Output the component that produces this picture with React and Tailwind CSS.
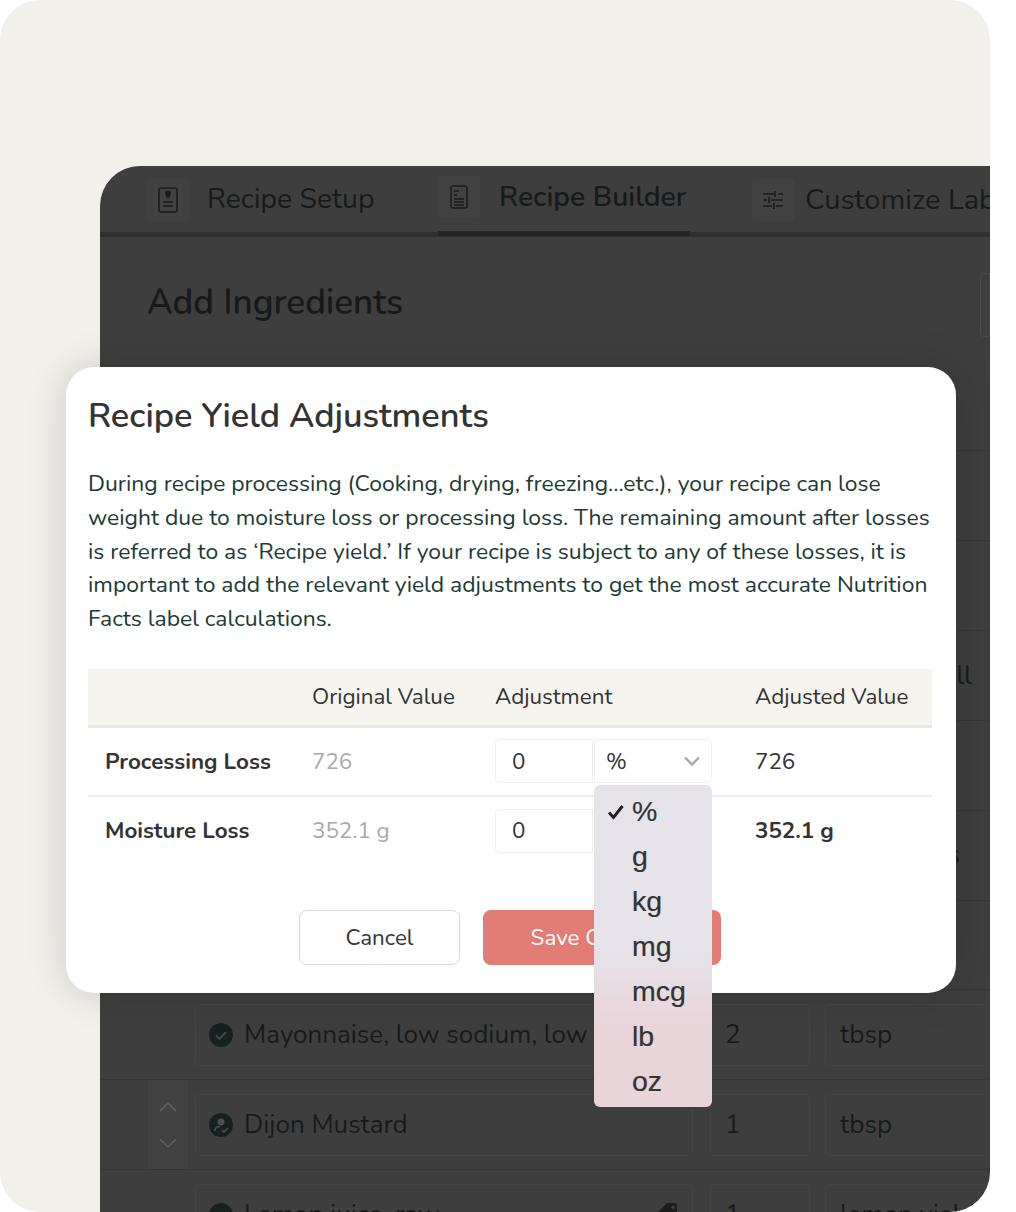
const dropdownUnits = ['g', 'kg', 'mg', 'mcg', 'lb', 'oz'];

const BookIcon = () => (
  <svg width="20" height="26" viewBox="0 0 20 26" fill="none" stroke="#191b1b" strokeWidth="1.6">
    <rect x="1" y="1" width="18" height="24" rx="2" />
    <path d="M7 6.500a3 3 0 1 1 6 0c0 1.200-.8 1.800-1 2.800v1.200H8V9.300c-.2-1-1-1.600-1-2.800z" fill="#191b1b" stroke="none" />
    <path d="M5 15h10M5 19h10" />
  </svg>
);

const ListIcon = () => (
  <svg width="18" height="24" viewBox="0 0 18 24" fill="none" stroke="#191b1b" strokeWidth="1.5">
    <rect x="1" y="1" width="16" height="22" rx="2" />
    <path d="M4 6h5M4 10h3M4 14h10M4 17h10M4 20h10" />
  </svg>
);

const SlidersIcon = () => (
  <svg width="20" height="20" viewBox="0 0 20 20" fill="none" stroke="#191b1b" strokeWidth="1.6">
    <path d="M0 4h11M15 4h5M12 1v6M0 10h4M8 10h12M6 7v6M0 16h9M13 16h7M11 13v6" />
  </svg>
);

const VerifiedDot = () => (
  <svg width="24" height="24" viewBox="0 0 24 24" className="shrink-0">
    <circle cx="12" cy="12" r="12" fill="#18211f" />
    <path d="M7 12.500l3.500 3.500L17 9" fill="none" stroke="#4a4f4e" strokeWidth="1.800" />
  </svg>
);

const PersonDot = () => (
  <svg width="24" height="24" viewBox="0 0 24 24" className="shrink-0">
    <circle cx="12" cy="12" r="12" fill="#18211f" />
    <circle cx="12" cy="9" r="3.500" fill="#4a4f4e" />
    <path d="M5.500 18c.5-3 3-4.500 5.500-4.500M13 17l2 2 4-4" fill="none" stroke="#4a4f4e" strokeWidth="1.600" />
  </svg>
);

const TagIcon = () => (
  <svg width="26" height="26" viewBox="0 0 26 26" className="shrink-0">
    <path d="M14 1h10v10L11 25 1 14z" fill="#1c1e1e" />
    <circle cx="20" cy="5.500" r="1.800" fill="#3e3e3e" />
  </svg>
);

const Chevron = ({ up }) => (
  <svg width="18" height="10" viewBox="0 0 18 10" fill="none" stroke="#5b5c5c" strokeWidth="1.800">
    <path d={up ? 'M1 9l8-8 8 8' : 'M1 1l8 8 8-8'} />
  </svg>
);

const Tab = ({ icon, label, active, tileClass, textClass }) => (
  <div className={`flex h-[70px] shrink-0 items-center whitespace-nowrap ${active ? 'border-b-[5px] border-[#232424]' : ''} ${tileClass}`}>
    <div className="flex h-[42px] w-[42px] shrink-0 items-center justify-center rounded bg-[#424242]">{icon}</div>
    <span className={`text-[#181a1a] ${textClass}`}>{label}</span>
  </div>
);

const IngredientRow = ({ icon, name, qty, unit, arrows, tag }) => (
  <div className="flex h-[90px] shrink-0 items-center border-b border-[#363636] pl-[48px]">
    <div className={`mr-[7px] flex h-full w-[40px] shrink-0 flex-col items-center justify-center gap-[26px] ${arrows ? 'bg-[#424242]' : ''}`}>
      {arrows && <Chevron up />}
      {arrows && <Chevron />}
    </div>
    <div className="flex h-[62px] w-[498px] shrink-0 items-center gap-[11px] rounded border border-[#444444] px-[13px]">
      {icon}
      <span className="flex-1 whitespace-nowrap text-[26px] text-[#181a1a]">{name}</span>
      {tag && <TagIcon />}
    </div>
    <div className="ml-[17px] flex h-[62px] w-[100px] shrink-0 items-center rounded border border-[#444444] pl-[14px] text-[26px] text-[#181a1a]">{qty}</div>
    <div className="ml-[15px] flex h-[62px] w-[300px] shrink-0 items-center rounded border border-[#444444] pl-[14px] text-[26px] text-[#181a1a]">{unit}</div>
  </div>
);

const ValueBox = ({ value }) => (
  <div className="flex h-[44px] w-[98px] items-center rounded-l-[5px] border border-[#f0f0ee] pl-[16px] text-[#333]">{value}</div>
);

const App = () => {
  return (
    <div className="h-[1212px] w-[1016px] bg-white font-['Nunito','Lato','Noto_Sans',sans-serif]">
      <div className="relative h-[1212px] w-[990px] overflow-hidden rounded-[40px] bg-[#f1f0eb] pl-[100px] pt-[166px]">
        {/* Dimmed app behind the modal */}
        <div className="flex h-[1046px] flex-col overflow-hidden rounded-tl-[40px] bg-[#3e3e3e]">
          <div className="flex h-[71px] shrink-0 items-start border-b-[5px] border-[#2f2f2f] pl-[47px]">
            <Tab icon={<BookIcon />} label="Recipe Setup" tileClass="w-[291px] pb-[3px]" textClass="ml-[18px] text-[28.400px]" />
            <Tab icon={<ListIcon />} label="Recipe Builder" active tileClass="w-[252px] pb-[3px]" textClass="ml-[19px] text-[28.400px] font-semibold" />
            <Tab icon={<SlidersIcon />} label="Customize Label" tileClass="ml-[62px] w-[300px] pb-[3px]" textClass="ml-[11px] text-[29px]" />
          </div>
          <div className="flex h-[124px] shrink-0 items-start justify-between pl-[47px] pt-[44px]">
            <h2 className="text-[35px] font-semibold leading-[44px] text-[#181a1a]">Add Ingredients</h2>
            <div className="mt-[-8px] h-[64px] w-[10px] rounded-l border border-[#4a4a4a]" />
          </div>
          {/* rows sit mostly behind the modal, only their edges show */}
          <div className="flex h-[90px] shrink-0 border-b border-[#363636]" />
          <div className="flex h-[90px] shrink-0 border-b border-[#363636]" />
          <div className="flex h-[90px] shrink-0 border-b border-[#363636]" />
          <div className="flex h-[90px] shrink-0 items-center justify-end border-b border-[#363636] pr-[18px] text-[26px] text-[#181a1a]">ll</div>
          <div className="flex h-[90px] shrink-0 border-b border-[#363636]" />
          <div className="flex h-[90px] shrink-0 items-end justify-end border-b border-[#363636] pb-[26px] pr-[30px] text-[26px] text-[#181a1a]">s</div>
          <div className="flex h-[89px] shrink-0 border-b border-[#363636]" />
          <IngredientRow icon={<VerifiedDot />} name="Mayonnaise, low sodium, low calorie" qty="2" unit="tbsp" />
          <IngredientRow icon={<PersonDot />} name="Dijon Mustard" qty="1" unit="tbsp" arrows />
          <IngredientRow icon={<VerifiedDot />} name="Lemon juice, raw" qty="1" unit="lemon yield" tag />
        </div>

        {/* Modal */}
        <div className="absolute left-[66px] top-[367px] h-[626px] w-[890px] rounded-[28px] bg-white pl-[22px] pr-[24px] pt-[28px] shadow-[0_0_40px_rgba(0,0,0,0.16)]">
          <h1 className="text-[34.4px] font-semibold leading-[42px] text-[#333]">Recipe Yield Adjustments</h1>
          <p className="mt-[30px] whitespace-nowrap text-[22.9px] leading-[33.8px] text-[#1c3a35]">
            During recipe processing (Cooking, drying, freezing...etc.), your recipe can lose<br />
            weight due to moisture loss or processing loss. The remaining amount after losses<br />
            is referred to as ‘Recipe yield.’ If your recipe is subject to any of these losses, it is<br />
            important to add the relevant yield adjustments to get the most accurate Nutrition<br />
            Facts label calculations.
          </p>

          <div className="mt-[33px] text-[22.4px] text-[#333]">
            <div className="grid h-[59px] grid-cols-[224px_183px_260px_1fr] items-center border-b-[3px] border-[#e6e6e3] bg-[#f5f4ef]">
              <div />
              <div>Original Value</div>
              <div>Adjustment</div>
              <div>Adjusted Value</div>
            </div>
            <div className="grid h-[69px] grid-cols-[224px_183px_260px_1fr] items-center border-b-2 border-[#efefed]">
              <div className="pl-[17px] font-bold">Processing Loss</div>
              <div className="text-[#a9a9a9]">726</div>
              <div className="flex">
                <ValueBox value="0" />
                <div className="ml-[1px] flex h-[44px] w-[118px] items-center justify-between rounded-r-[5px] border border-[#f0f0ee] pl-[11px] pr-[11px]">
                  <span>%</span>
                  <svg width="16" height="10" viewBox="0 0 16 10" fill="none" stroke="#a8a8a8" strokeWidth="2.400">
                    <path d="M1 1.500l7 7 7-7" />
                  </svg>
                </div>
              </div>
              <div>726</div>
            </div>
            <div className="grid h-[68px] grid-cols-[224px_183px_260px_1fr] items-center">
              <div className="pl-[17px] font-bold">Moisture Loss</div>
              <div className="text-[#a9a9a9]">352.1 g</div>
              <div><ValueBox value="0" /></div>
              <div className="font-bold">352.1 g</div>
            </div>
          </div>

          <div className="mt-[45px] flex gap-[23px] pl-[211px] text-[22.4px]">
            <button className="h-[55px] w-[161px] rounded-[8px] border border-[#d9d9d9] text-[#333]">Cancel</button>
            <button className="h-[55px] w-[238px] rounded-[8px] bg-[#e27c76] text-white">Save Changes</button>
          </div>
        </div>

        {/* Native select dropdown */}
        <div className="absolute left-[594px] top-[785px] h-[322px] w-[118px] rounded-[6px] bg-gradient-to-b from-[#e6e3ea] from-50% to-[#e9d4da] to-75% pt-[4px] font-['Liberation_Sans',sans-serif] text-[28.5px] leading-[45px] text-[#333] [-webkit-text-stroke:0.2px_#333]">
          <div className="flex items-center">
            <svg width="18" height="16" viewBox="0 0 18 16" fill="none" stroke="#222" strokeWidth="3" className="ml-[13px] mr-[7px]">
              <path d="M2 8.500l4.500 5L15.500 2" />
            </svg>
            <span>%</span>
          </div>
          {dropdownUnits.map((unit) => (
            <div key={unit} className="pl-[38px]">{unit}</div>
          ))}
        </div>
      </div>
    </div>
  );
};

export default App;
